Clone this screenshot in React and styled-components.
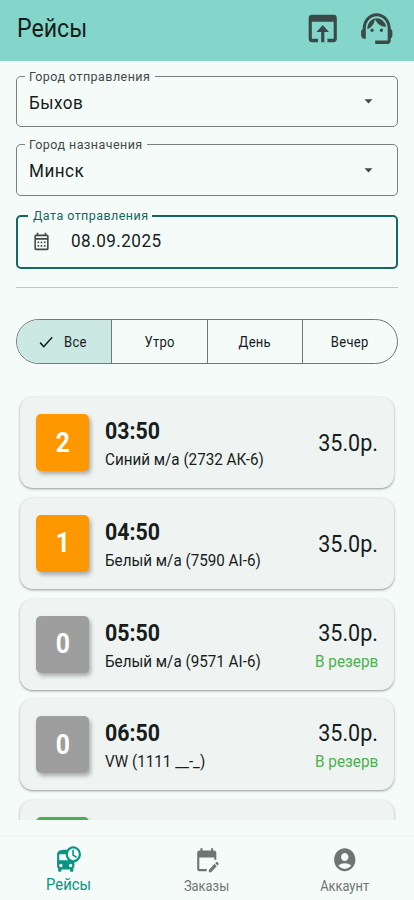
import React from "react";
import styled, { createGlobalStyle } from "styled-components";
import {
  MdOpenInBrowser,
  MdSupportAgent,
  MdArrowDropDown,
  MdOutlineCalendarMonth,
  MdCheck,
  MdDepartureBoard,
  MdEditCalendar,
  MdAccountCircle,
} from "react-icons/md";

const Global = createGlobalStyle`
  *, *::before, *::after { box-sizing: border-box; }
  body { margin: 0; background: #f5fbf9; }
`;

const Screen = styled.div`
  display: flex;
  flex-direction: column;
  width: 414px;
  height: 900px;
  overflow: hidden;
  background: #f5fbf9;
  color: #171d1c;
  font-family: Roboto, "Liberation Sans", sans-serif;
`;

/* Condensed label: glyphs are narrowed horizontally from the given edge. */
const Label = styled.span`
  display: block;
  white-space: nowrap;
  font-size: ${(p) => p.$size}px;
  line-height: ${(p) => p.$line || 20}px;
  font-weight: ${(p) => p.$weight || 400};
  letter-spacing: ${(p) => p.$spacing || 0}px;
  color: ${(p) => p.$color || "inherit"};
  transform: scaleX(${(p) => p.$stretch || 0.9});
  transform-origin: ${(p) => p.$origin || "left"} center;
`;

const Header = styled.header`
  display: flex;
  flex: none;
  align-items: flex-start;
  justify-content: space-between;
  height: 61px;
  padding: 8px 19px 0 17px;
  background: #84d6ca;
`;

const Title = styled.div`
  padding-top: 6px;
`;

const Actions = styled.div`
  display: flex;
  gap: 16px;
  color: #3b4a48;

  svg {
    display: block;
    width: 37.5px;
    height: 41px;
  }
`;

const Form = styled.section`
  display: flex;
  flex: none;
  flex-direction: column;
  padding: 15px 16px 0;
`;

const Field = styled.div`
  position: relative;
  display: flex;
  align-items: center;
  justify-content: space-between;
  height: ${(p) => p.$height}px;
  margin-bottom: ${(p) => p.$gap}px;
  padding: 2px 19px 0 ${(p) => (p.$active ? 14 : 12)}px;
  border: ${(p) => (p.$active ? "2px solid #14695f" : "1px solid #77817f")};
  border-radius: 5px;
`;

const Notch = styled.div`
  position: absolute;
  top: ${(p) => (p.$active ? -12 : -11)}px;
  left: ${(p) => (p.$active ? 10 : 8)}px;
  width: ${(p) => p.$width}px;
  padding-left: ${(p) => (p.$active ? 5 : 4)}px;
  background: #f5fbf9;
`;

const DateValue = styled.div`
  display: flex;
  align-items: center;
  gap: 20px;
  margin-top: -4px;
`;

const CalendarIcon = styled(MdOutlineCalendarMonth)`
  width: 19px;
  height: 21px;
  color: #3f4947;
`;

const Caret = styled(MdArrowDropDown)`
  width: 19px;
  height: 20px;
  margin-top: -3px;
  color: #3f4947;
`;

const Divider = styled.hr`
  width: 100%;
  height: 1px;
  margin: 0 0 31px;
  border: 0;
  background: #bec9c6;
`;

const Segments = styled.div`
  display: grid;
  flex: none;
  grid-template-columns: 95px 96px 95px 1fr;
  height: 45px;
  overflow: hidden;
  border: 1px solid #6f7977;
  border-radius: 23px;
`;

const Segment = styled.div`
  display: flex;
  align-items: center;
  justify-content: center;
  gap: 8px;
  padding-right: ${(p) => (p.$selected ? 3 : 0)}px;
  border-right: 1px solid #6f7977;
  background: ${(p) => (p.$selected ? "#cce8e3" : "transparent")};

  &:last-child {
    border-right: 0;
  }

  svg {
    width: 18px;
    height: 20px;
  }
`;

const List = styled.main`
  display: flex;
  flex: none;
  flex-direction: column;
  gap: 9.8px;
  height: 443px;
  margin-top: 13px;
  padding: 20px 20px 0;
  overflow: hidden;
`;

const Card = styled.article`
  display: flex;
  flex: none;
  align-items: flex-start;
  height: 91px;
  padding: 17px 16px 0;
  border-radius: 13px;
  background: #eff4f2;
  box-shadow: 0 1px 2px rgba(0, 0, 0, 0.3), 0 1px 3px 1px rgba(0, 0, 0, 0.08);
`;

const Seats = styled.div`
  display: flex;
  align-items: center;
  justify-content: center;
  width: 53px;
  height: 57px;
  margin-right: 16px;
  border-radius: 5px;
  background: ${(p) => p.$color};
  box-shadow: 2px 3px 4px rgba(0, 0, 0, 0.3);
`;

const Trip = styled.div`
  flex: 1;
  min-width: 0;
`;

const Price = styled.div`
  display: flex;
  flex-direction: column;
  align-items: flex-end;
  padding-top: ${(p) => (p.$reserve ? 0 : 12)}px;
`;

const Nav = styled.nav`
  display: grid;
  flex: 1;
  grid-template-columns: repeat(3, 1fr);
  margin-top: 16px;
  border-top: 1px solid #eff4f3;
`;

const NavItem = styled.div`
  display: flex;
  flex-direction: column;
  align-items: center;
  gap: 2px;
  padding-top: ${(p) => (p.$active ? 8 : 9)}px;
  color: ${(p) => (p.$active ? "#0b9486" : "#6f7573")};

  svg {
    width: ${(p) => (p.$active ? 26 : 25.5)}px;
    height: ${(p) => (p.$active ? 28 : 27.5)}px;
  }
`;

const trips = [
  { seats: 2, color: "#ff9800", time: "03:50", vehicle: "Синий м/а (2732 АК-6)", price: "35.0р." },
  { seats: 1, color: "#ff9800", time: "04:50", vehicle: "Белый м/а (7590 AI-6)", price: "35.0р." },
  { seats: 0, color: "#9e9e9e", time: "05:50", vehicle: "Белый м/а (9571 AI-6)", price: "35.0р.", reserve: true },
  { seats: 0, color: "#9e9e9e", time: "06:50", vehicle: "VW (1111 __-_)", price: "35.0р.", reserve: true },
  { seats: "", color: "#4caf50", time: "", vehicle: "", price: "" },
];

const periods = ["Все", "Утро", "День", "Вечер"];

function SelectField({ label, value, notch, height, gap }) {
  return (
    <Field $height={height} $gap={gap}>
      <Notch $width={notch}>
        <Label $size={13.7} $spacing={0.5} $stretch={0.913} $color="#3f4947">{label}</Label>
      </Notch>
      <Label $size={18.5} $line={24} $spacing={0.5} $stretch={0.925}>{value}</Label>
      <Caret preserveAspectRatio="none" />
    </Field>
  );
}

function TripCard({ seats, color, time, vehicle, price, reserve }) {
  return (
    <Card>
      <Seats $color={color}>
        <Label $size={27.5} $line={30} $weight={700} $color="#fff" $origin="center">{seats}</Label>
      </Seats>
      <Trip>
        <Label $size={24} $line={34} $weight={700} $stretch={0.89}>{time}</Label>
        <Label $size={17} $line={22} $stretch={0.895}>{vehicle}</Label>
      </Trip>
      <Price $reserve={reserve}>
        <Label $size={24.5} $line={34} $stretch={0.88} $origin="right">{price}</Label>
        {reserve && (
          <Label $size={17} $line={22} $color="#4caf50" $origin="right">В резерв</Label>
        )}
      </Price>
    </Card>
  );
}

export default function App() {
  return (
    <Screen>
      <Global />
      <Header>
        <Title>
          <Label $size={25.3} $line={30} $stretch={0.915}>Рейсы</Label>
        </Title>
        <Actions>
          <MdOpenInBrowser preserveAspectRatio="none" />
          <MdSupportAgent preserveAspectRatio="none" />
        </Actions>
      </Header>
      <Form>
        <SelectField label="Город отправления" value="Быхов" notch={130} height={51} gap={17} />
        <SelectField label="Город назначения" value="Минск" notch={122} height={52} gap={19} />
        <Field $active $height={54} $gap={18}>
          <Notch $active $width={124}>
            <Label $size={13.7} $spacing={0.5} $stretch={0.913} $color="#14695f">Дата отправления</Label>
          </Notch>
          <DateValue>
            <CalendarIcon preserveAspectRatio="none" />
            <Label $size={18.5} $line={24} $spacing={0.5} $stretch={0.925}>08.09.2025</Label>
          </DateValue>
        </Field>
        <Divider />
        <Segments>
          {periods.map((name, index) => (
            <Segment key={name} $selected={index === 0}>
              {index === 0 && <MdCheck preserveAspectRatio="none" />}
              <Label $size={14.3} $spacing={0.3} $stretch={0.91} $origin="center">{name}</Label>
            </Segment>
          ))}
        </Segments>
      </Form>
      <List>
        {trips.map((trip, index) => (
          <TripCard key={index} {...trip} />
        ))}
      </List>
      <Nav>
        <NavItem $active>
          <MdDepartureBoard preserveAspectRatio="none" />
          <Label $size={16.2} $stretch={0.915} $origin="center">Рейсы</Label>
        </NavItem>
        <NavItem>
          <MdEditCalendar preserveAspectRatio="none" />
          <Label $size={14} $stretch={0.92} $origin="center">Заказы</Label>
        </NavItem>
        <NavItem>
          <MdAccountCircle preserveAspectRatio="none" />
          <Label $size={14} $stretch={0.92} $origin="center">Аккаунт</Label>
        </NavItem>
      </Nav>
    </Screen>
  );
}
